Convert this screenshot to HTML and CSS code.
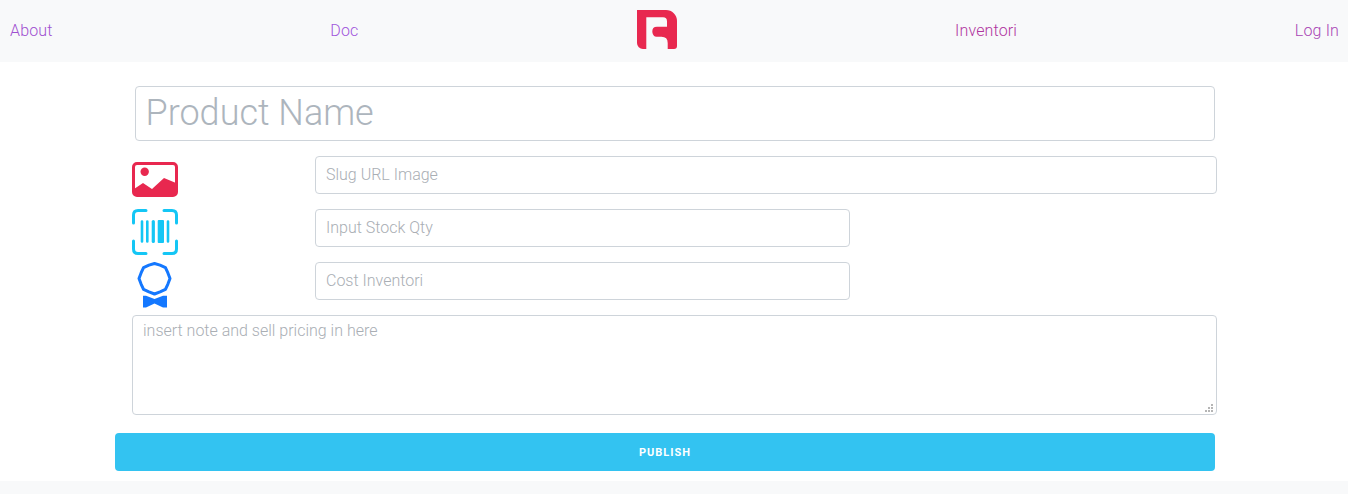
FILE: index.html
```html
<!DOCTYPE html>
<html lang="en">
<head>
<meta charset="utf-8">
<title>Publish product</title>
<link rel="stylesheet" href="styles.css">
</head>
<body>
<nav class="topbar">
  <a class="nav-link nav-about" href="#">About</a>
  <a class="nav-link nav-doc" href="#">Doc</a>
  <a class="logo" href="#" aria-label="Logo">
    <svg width="41" height="40" viewBox="-1 0 41 40"><path fill="#e8284f" d="M0 0H29A11 11 0 0 1 40 11V36Q40 39 37 39H30.700V33Q30.700 26.700 24.500 26.700H19.500Q16 26.700 15.300 22Q15 16.700 20 16.700H30V11.500Q30 7.300 26 7.300H9.300V39H6A6 6 0 0 1 0 33Z"/></svg>
  </a>
  <a class="nav-link nav-inv" href="#">Inventori</a>
  <a class="nav-link nav-login" href="#">Log In</a>
</nav>
<main class="form">
  <input class="field field-title" type="text" placeholder="Product Name">
  <div class="row">
    <svg class="icon icon-image" width="46" height="35" viewBox="0 0 46 35"><rect x="1.500" y="1.500" width="43" height="32" rx="3.500" fill="none" stroke="#e8284f" stroke-width="3"/><circle cx="12.700" cy="9.700" r="4.200" fill="#e8284f"/><path fill="#e8284f" d="M2 27L11 21L20 27L32 16L44 21V31Q44 34 41 34H5Q2 34 2 31Z"/></svg>
    <input class="field field-full" type="text" placeholder="Slug URL Image">
  </div>
  <div class="row">
    <svg class="icon" width="46" height="46" viewBox="0 0 46 46"><path fill="none" stroke="#14c6f5" stroke-width="3" stroke-linecap="round" d="M14 1.500H6Q1.500 1.500 1.500 6V14M32 1.500H40Q44.500 1.500 44.500 6V14M1.500 32V40Q1.500 44.500 6 44.500H14M44.500 32V40Q44.500 44.500 40 44.500H32"/><path fill="none" stroke="#14c6f5" stroke-linecap="round" stroke-width="2.600" d="M10 12.500V32.500M15.300 12.500V32.500M36 12.500V32.500"/><path fill="none" stroke="#14c6f5" stroke-linecap="round" stroke-width="3.200" d="M21.300 12.500V32.500"/><rect x="25.700" y="11" width="6.300" height="23" rx="1" fill="#14c6f5"/></svg>
    <input class="field field-half" type="text" placeholder="Input Stock Qty">
  </div>
  <div class="row">
    <svg class="icon" width="46" height="46" viewBox="0 0 46 46"><path fill="none" stroke="#1478ff" stroke-width="3" stroke-linejoin="round" d="M22.500 1.500L28.050 3.100L33.460 5.540L35.900 10.950L38 16.500L35.900 22.050L33.460 27.460L28.050 29.900L22.500 32L16.950 29.900L11.540 27.460L9.100 22.050L7 16.500L9.100 10.950L11.540 5.540L16.950 3.100Z"/><path fill="#1478ff" d="M11 33.700H14L22.500 37L31 33.700H35V45.500H31L22.500 41.500L14 45.500H11Z"/></svg>
    <input class="field field-half" type="text" placeholder="Cost Inventori">
  </div>
  <textarea class="notes" placeholder="insert note and sell pricing in here"></textarea>
  <button class="publish" type="button">PUBLISH</button>
</main>
<footer class="foot"></footer>
</body>
</html>
```

FILE: styles.css
```css
* { box-sizing: border-box; }

html, body { height: 100%; }

body {
  margin: 0;
  background: #fff;
  font-family: Roboto, "Liberation Sans", sans-serif;
  font-weight: 300;
  display: flex;
  flex-direction: column;
  overflow: hidden;
}

.topbar {
  height: 62px;
  flex: none;
  background: #f8f9fa;
  padding: 0 9px 1px 10px;
  display: flex;
  align-items: center;
  justify-content: space-between;
}

.nav-link {
  font-size: 16px;
  line-height: 24px;
  letter-spacing: 0.15px;
  text-decoration: none;
}

.nav-about { color: #a050d0; }
.nav-doc { color: #a055dc; }
.nav-inv { color: #b0359f; }
.nav-login { color: #a845b5; }

.logo { display: block; align-self: flex-start; margin-top: 10px; }
.logo svg { display: block; }

.form {
  flex: 1;
  padding: 24px 0 0 132px;
  display: flex;
  flex-direction: column;
  align-items: flex-start;
}

.field {
  height: 38px;
  border: 1px solid #ced4da;
  border-radius: 4px;
  padding: 0 10px 2px;
  font: 300 16px Roboto, "Liberation Sans", sans-serif;
  color: #495057;
  background: #fff;
  outline: none;
}

.field::placeholder,
.notes::placeholder {
  color: #a9aeb4;
  opacity: 1;
}

.field-title {
  width: 1080px;
  height: 55px;
  margin-left: 3px;
  padding-left: 9.500px;
  font-size: 36px;
}

.field-title::placeholder { color: #adb5bd; }

.row {
  display: flex;
  align-items: flex-start;
  margin-top: 15px;
  height: 38px;
}

.icon { flex: none; display: block; }
.icon-image { margin-top: 6px; }

.field-full { width: 902px; margin-left: 137px; }
.field-half { width: 535px; margin-left: 137px; }

.notes {
  display: block;
  width: 1085px;
  height: 100px;
  margin-top: 15px;
  padding: 3px 10px;
  border: 1px solid #ced4da;
  border-radius: 4px;
  font: 300 16px/1.5 Roboto, "Liberation Sans", sans-serif;
  outline: none;
}

.notes::-webkit-resizer {
  background-color: transparent;
  background-image:
    linear-gradient(#b5b5b5, #b5b5b5), linear-gradient(#b5b5b5, #b5b5b5),
    linear-gradient(#b5b5b5, #b5b5b5), linear-gradient(#b5b5b5, #b5b5b5),
    linear-gradient(#b5b5b5, #b5b5b5), linear-gradient(#b5b5b5, #b5b5b5);
  background-size: 2px 2px;
  background-repeat: no-repeat;
  background-position: 10px 5px, 7px 8px, 10px 8px, 4px 11px, 7px 11px, 10px 11px;
}

.publish {
  width: 1100px;
  height: 38px;
  margin: 18px 0 0 -17px;
  border: 0;
  border-radius: 4px;
  background: #33c3f1;
  color: #fff;
  font: 700 11px Roboto, "Liberation Sans", sans-serif;
  letter-spacing: 1px;
}

.foot {
  height: 13px;
  flex: none;
  background: #f8f9fa;
}
```
